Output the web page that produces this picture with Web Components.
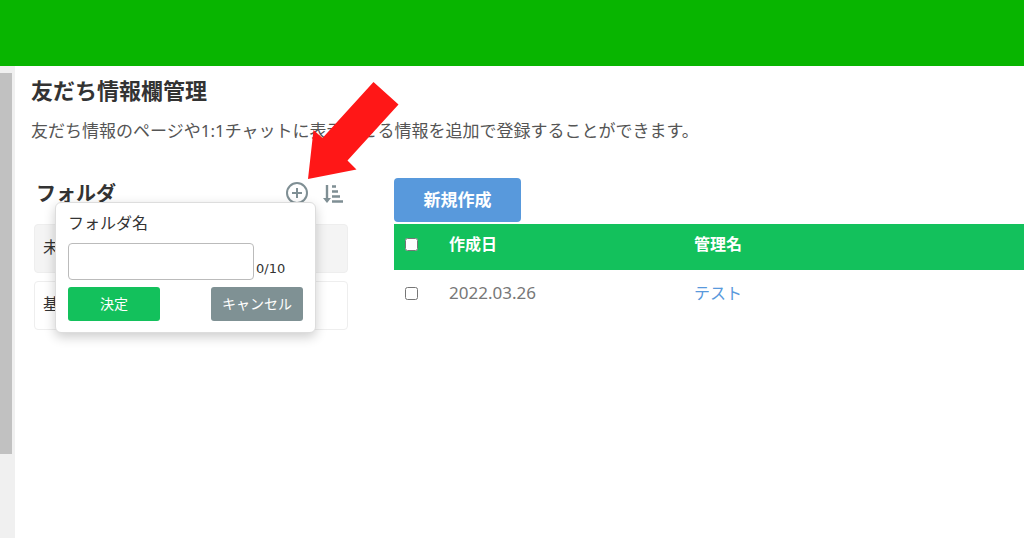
<!DOCTYPE html>
<html lang="ja">
<head>
<meta charset="utf-8">
<meta name="viewport" content="width=device-width, initial-scale=1">
<title>友だち情報欄管理</title>
<style>
  body {
    margin: 0;
    color: #333;
    background: #fff;
    font-family: "Noto Sans", "Noto Sans CJK JP", sans-serif;
    font-size: 16px;
  }
</style>
</head>
<body>
  <app-shell>
    <page-heading>
      友だち情報欄管理
      <span slot="lead">友だち情報のページや1:1チャットに表示させる情報を追加で登録することができます。</span>
    </page-heading>
    <split-view>
      <folder-panel slot="side" name="フォルダ">
        <folder-item active>未分類</folder-item>
        <folder-item>基本</folder-item>
        <folder-popup slot="popup" max="10"></folder-popup>
        <red-arrow slot="pointer"></red-arrow>
      </folder-panel>
      <info-table></info-table>
    </split-view>
  </app-shell>

<script>
class BaseElement extends HTMLElement {
  constructor() {
    super();
    this.attachShadow({ mode: 'open' });
    this.shadowRoot.innerHTML = this.render();
  }
}

class AppShell extends BaseElement {
  render() {
    return `
      <style>
        :host { display: flex; flex-direction: column; min-height: 100vh; }
        header { height: 66px; background: #08b500; }
        .body { flex: 1; display: flex; }
        .rail { width: 15px; background: #f0f0f0; display: grid; padding-top: 7px; box-sizing: border-box; }
        .thumb { width: 12px; height: 82%; background: #c1c1c1; }
        main { flex: 1; min-width: 0; }
      </style>
      <header></header>
      <div class="body">
        <div class="rail"><div class="thumb"></div></div>
        <main><slot></slot></main>
      </div>
    `;
  }
}

class PageHeading extends BaseElement {
  render() {
    return `
      <style>
        :host { display: block; padding: 9px 16px 0; }
        h1 { margin: 0; font-size: 22px; line-height: 30px; font-weight: 700; }
        p { margin: 14px 0 0; font-size: 17px; line-height: 24px; color: #555; }
      </style>
      <h1><slot></slot></h1>
      <p><slot name="lead"></slot></p>
    `;
  }
}

class SplitView extends BaseElement {
  render() {
    return `
      <style>
        :host { display: grid; grid-template-columns: 314px 1fr; gap: 46px; padding: 35px 0 0 19px; }
      </style>
      <slot name="side"></slot>
      <slot></slot>
    `;
  }
}

class FolderPanel extends BaseElement {
  render() {
    return `
      <style>
        :host { display: block; position: relative; }
        .head { display: flex; align-items: center; height: 32px; padding: 0 4px 0 2px; margin-bottom: 14px; }
        h2 { flex: 1; margin: 0; font-size: 20px; line-height: 32px; font-weight: 700; }
        button { display: flex; border: 0; padding: 0; background: none; color: #7f8f94; cursor: pointer; }
        .add { margin-right: 13px; }
        .list { display: grid; gap: 8px; }
      </style>
      <div class="head">
        <h2></h2>
        <button class="add" aria-label="フォルダを追加">
          <svg width="24" height="26" viewBox="0 0 24 26" fill="none" stroke="currentColor" stroke-width="2">
            <circle cx="12" cy="12" r="10"/>
            <path d="M12 7v10M7 12h10"/>
          </svg>
        </button>
        <button aria-label="並べ替え">
          <svg width="22" height="20" viewBox="0 0 22 20" fill="none" stroke="currentColor">
            <path d="M5 1v14" stroke-width="2.4"/>
            <path d="M1 14h8l-4 5z" fill="currentColor" stroke="none"/>
            <path d="M10 2.5h4M10 7.5h6M10 12.5h8M10 17.5h11" stroke-width="2.4"/>
          </svg>
        </button>
      </div>
      <div class="list"><slot></slot></div>
      <slot name="popup"></slot>
      <slot name="pointer"></slot>
    `;
  }

  connectedCallback() {
    this.shadowRoot.querySelector('h2').innerText = this.getAttribute('name');
  }
}

class FolderItem extends BaseElement {
  render() {
    return `
      <style>
        :host {
          display: block;
          box-sizing: border-box;
          padding: 10px 8px 12px;
          font-size: 16px;
          line-height: 25px;
          border: 1px solid #eee;
          border-radius: 4px;
        }
        :host([active]) { background: #f4f4f4; }
      </style>
      <slot></slot>
    `;
  }
}

class FolderPopup extends BaseElement {
  render() {
    return `
      <style>
        :host {
          position: absolute;
          left: 21px;
          top: 24px;
          width: 261px;
          box-sizing: border-box;
          padding: 8px 12px 11px;
          background: #fff;
          border: 1px solid #ddd;
          border-radius: 6px;
          box-shadow: 0 4px 12px rgba(0, 0, 0, .2);
        }
        label { display: block; font-size: 16px; line-height: 24px; margin-bottom: 8px; }
        .field { display: flex; align-items: flex-end; gap: 2px; margin-bottom: 7px; }
        input {
          width: 186px;
          height: 37px;
          box-sizing: border-box;
          padding: 0 8px;
          border: 1px solid #bbb;
          border-radius: 4px;
          font: inherit;
        }
        .count { font: 13px/22px "DejaVu Sans", sans-serif; }
        .actions { display: flex; justify-content: space-between; }
        button {
          width: 92px;
          height: 34px;
          border: 0;
          padding: 0 0 2px;
          border-radius: 3px;
          color: #fff;
          font: inherit;
          font-size: 14px;
          cursor: pointer;
        }
        .ok { background: #13c15c; }
        .cancel { background: #7f9194; }
      </style>
      <label for="name">フォルダ名</label>
      <div class="field">
        <input id="name" type="text">
        <span class="count"></span>
      </div>
      <div class="actions">
        <button class="ok">決定</button>
        <button class="cancel">キャンセル</button>
      </div>
    `;
  }

  updateCount() {
    const input = this.shadowRoot.querySelector('input');
    this.shadowRoot.querySelector('.count').innerText = `${input.value.length}/${input.maxLength}`;
  }

  connectedCallback() {
    const input = this.shadowRoot.querySelector('input');
    input.maxLength = Number(this.getAttribute('max'));
    input.addEventListener('input', () => this.updateCount());
    this.updateCount();
  }
}

class RedArrow extends BaseElement {
  render() {
    return `
      <style>
        :host { position: absolute; left: 274px; top: -96px; pointer-events: none; }
        svg { display: block; }
      </style>
      <svg width="92" height="98" viewBox="0 0 92 98">
        <path d="M0 97L5.5 48 14.5 56 65.5 0 90.5 22.5 39.5 78.5 48.5 87.5z" fill="#ff1717"/>
      </svg>
    `;
  }
}

class InfoTable extends BaseElement {
  render() {
    return `
      <style>
        :host { display: block; min-width: 0; }
        .create {
          display: block;
          width: 127px;
          height: 44px;
          margin-bottom: 2px;
          padding: 0 0 4px;
          border: 0;
          border-radius: 4px;
          background: #5899dc;
          color: #fff;
          font: inherit;
          font-size: 17px;
          font-weight: 700;
          cursor: pointer;
        }
        table { width: 100%; border-collapse: collapse; table-layout: fixed; }
        th, td { height: 46px; box-sizing: border-box; padding: 0; text-align: left; font-size: 16px; line-height: 24px; }
        th { background: #13c15c; color: #fff; padding-bottom: 6px; }
        td { color: #777; }
        .check { width: 55px; }
        .date { width: 245px; }
        time { font-size: 17px; }
        input { display: block; width: 13px; height: 13px; margin: 0 0 0 11px; }
        a { color: #5899dc; text-decoration: none; }
      </style>
      <button class="create">新規作成</button>
      <table>
        <thead>
          <tr>
            <th class="check"><input type="checkbox" aria-label="すべて選択"></th>
            <th class="date">作成日</th>
            <th>管理名</th>
          </tr>
        </thead>
        <tbody>
          <tr>
            <td><input type="checkbox" aria-label="テストを選択"></td>
            <td><time datetime="2022-03-26">2022.03.26</time></td>
            <td><a href="#test">テスト</a></td>
          </tr>
        </tbody>
      </table>
    `;
  }
}

customElements.define('app-shell', AppShell);
customElements.define('page-heading', PageHeading);
customElements.define('split-view', SplitView);
customElements.define('folder-panel', FolderPanel);
customElements.define('folder-item', FolderItem);
customElements.define('folder-popup', FolderPopup);
customElements.define('red-arrow', RedArrow);
customElements.define('info-table', InfoTable);
</script>
</body>
</html>
